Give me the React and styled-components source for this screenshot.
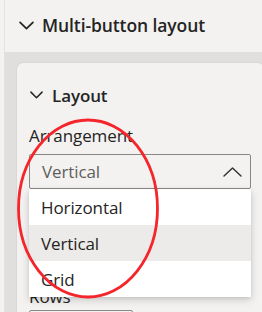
import React from 'react';
import styled, { createGlobalStyle } from 'styled-components';

const GlobalStyle = createGlobalStyle`
  html, body {
    margin: 0;
    padding: 0;
    background: #f0f0f0;
    overflow: hidden;
  }
  body {
    font-family: 'Open Sans', 'Noto Sans', sans-serif;
    color: #252423;
  }
`;

const Page = styled.div`
  display: flex;
  width: 262px;
  height: 312px;
  overflow: hidden;
  position: relative;
`;

const Gutter = styled.div`
  width: 4px;
  flex-shrink: 0;
  background: #f2f2f2;
  border-right: 1px solid #e3e3e3;
`;

const Pane = styled.div`
  flex: 1;
  display: flex;
  flex-direction: column;
  background: #e1dfdd;
  min-width: 0;
`;

const SectionHeader = styled.div`
  height: 52px;
  flex-shrink: 0;
  display: flex;
  align-items: center;
  gap: 8px;
  padding: 0 0 2px 14px;
  box-sizing: border-box;
  background: #f3f2f1;
  font-size: 17.5px;
  font-weight: 600;
  letter-spacing: -0.1px;
`;

const Body = styled.div`
  flex: 1;
  padding: 11px 0 0 12px;
`;

const Card = styled.div`
  height: 100%;
  margin-right: -2px;
  background: #f3f2f1;
  border-radius: 6px 6px 0 0;
  box-shadow: 0 0 2px rgba(0, 0, 0, 0.12);
  padding: 20px 12px 0 12px;
  box-sizing: border-box;
`;

const GroupHeader = styled.div`
  display: flex;
  align-items: center;
  gap: 9px;
  font-size: 17px;
  font-weight: 600;
  letter-spacing: -0.1px;
  padding-left: 1px;
  height: 24px;
`;

const Label = styled.div`
  font-size: 17px;
  line-height: 22px;
  margin-top: ${({ top }) => top || 0}px;
  letter-spacing: -0.1px;
  color: #252423;
`;

const Dropdown = styled.div`
  position: relative;
  width: 222px;
  margin-top: 7px;
`;

const Field = styled.div`
  height: 35px;
  box-sizing: border-box;
  border: 1px solid #8a8886;
  border-radius: 2px;
  background: #f3f2f1;
  display: flex;
  align-items: center;
  justify-content: space-between;
  padding: 0 8px 0 12px;
  font-size: 17px;
  letter-spacing: -0.1px;
  color: #605e5c;
`;

const List = styled.div`
  position: absolute;
  top: 35px;
  left: 0;
  right: 0;
  background: #ffffff;
  box-shadow: 0 3px 8px rgba(0, 0, 0, 0.16), 0 1px 3px rgba(0, 0, 0, 0.08);
  z-index: 2;
`;

const Option = styled.div`
  height: 36px;
  display: flex;
  align-items: center;
  padding-left: 12px;
  font-size: 17px;
  letter-spacing: -0.1px;
  color: #252423;
  background: ${({ selected }) => (selected ? '#edebe9' : '#ffffff')};
`;

const SmallBox = styled.div`
  width: 104px;
  height: 30px;
  margin-top: 2px;
  border: 1px solid #8a8886;
  border-radius: 2px;
  box-sizing: border-box;
`;

const Annotation = styled.svg`
  position: absolute;
  left: 0;
  top: 0;
  pointer-events: none;
  z-index: 5;
`;

function ChevronDown({ size = 14 }) {
  return (
    <svg width={size} height={size * 0.6} viewBox="0 0 14 8" fill="none">
      <path d="M1 1l6 6 6-6" stroke="#252423" strokeWidth="1.6" strokeLinecap="round" strokeLinejoin="round" />
    </svg>
  );
}

function ChevronUp() {
  return (
    <svg width="19" height="10" viewBox="0 0 19 10" fill="none">
      <path d="M1 9l8.5-8 8.5 8" stroke="#323130" strokeWidth="1.4" strokeLinecap="round" strokeLinejoin="round" />
    </svg>
  );
}

const options = ['Horizontal', 'Vertical', 'Grid'];

export default function App() {
  return (
    <>
      <GlobalStyle />
      <Page>
        <Gutter />
        <Pane>
          <SectionHeader>
            <ChevronDown size={15} />
            <span>Multi-button layout</span>
          </SectionHeader>
          <Body>
            <Card>
              <GroupHeader>
                <ChevronDown size={13} />
                <span>Layout</span>
              </GroupHeader>
              <Label top={18}>Arrangement</Label>
              <Dropdown>
                <Field>
                  <span>Vertical</span>
                  <ChevronUp />
                </Field>
                <List>
                  {options.map(o => (
                    <Option key={o} selected={o === 'Vertical'}>
                      {o}
                    </Option>
                  ))}
                </List>
              </Dropdown>
              <Label top={97}>Rows</Label>
              <SmallBox />
            </Card>
          </Body>
        </Pane>
        <Annotation width="262" height="312">
          <ellipse cx="88" cy="208.5" rx="69.5" ry="88.5" fill="none" stroke="#f4252b" strokeWidth="2.8" />
        </Annotation>
      </Page>
    </>
  );
}
